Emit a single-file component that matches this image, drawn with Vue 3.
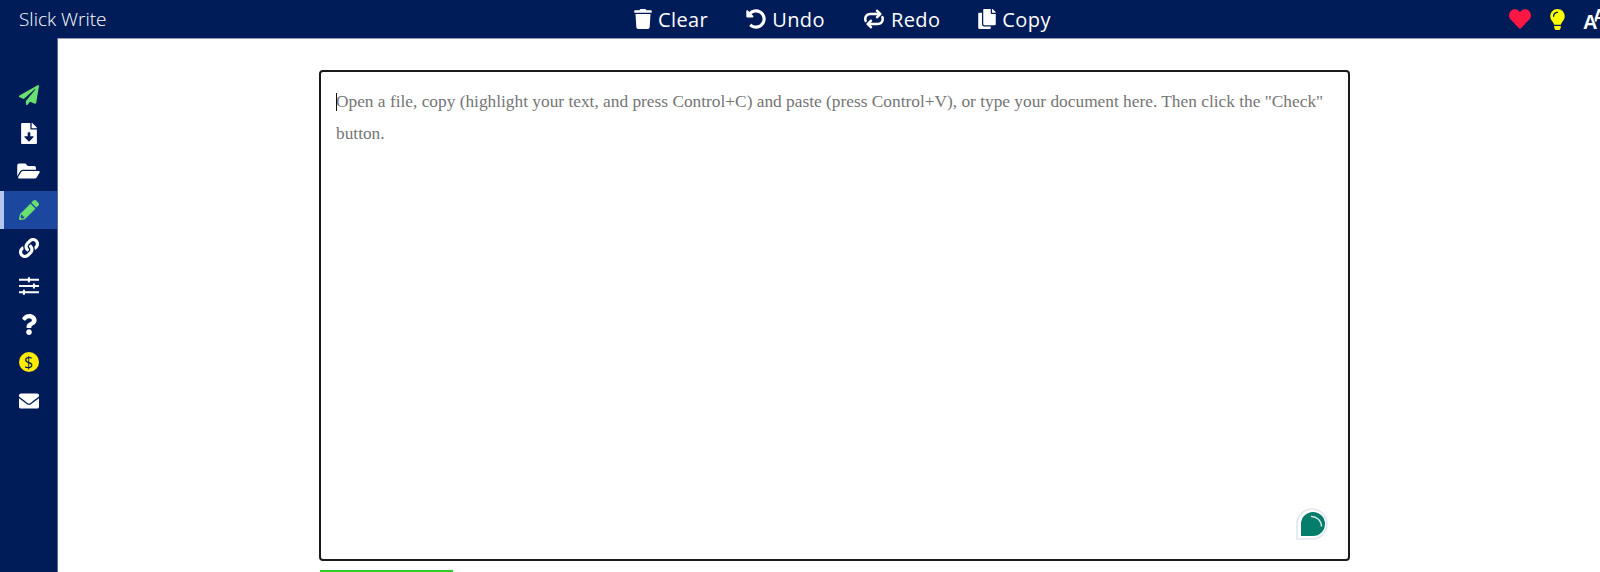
<template>
  <div class="page">
    <header class="topbar">
      <div class="brand">Slick Write</div>
      <nav class="tools">
        <a v-for="t in tools" :key="t.label" class="tool">
          <svg :viewBox="t.box" :style="{ width: t.w + 'px' }" class="tool-icon"><path :d="t.d" fill="#fff" /></svg>
          <span>{{ t.label }}</span>
        </a>
      </nav>
      <div class="extras">
        <svg viewBox="0 0 512 512" class="heart"><path :d="heart" fill="#ff1744" /></svg>
        <svg viewBox="0 0 352 512" class="bulb"><path :d="bulb" fill="#ffff00" /></svg>
        <span class="fontsize"><span class="a-small">A</span><span class="a-big">A</span></span>
      </div>
    </header>
    <div class="body">
      <aside class="sidebar">
        <div
          v-for="(item, i) in sideItems"
          :key="i"
          class="side-item"
          :class="{ active: item.active }"
        >
          <span v-if="item.dollar" class="dollar">$</span>
          <svg v-else :viewBox="item.box" :style="{ width: item.w + 'px', height: item.h + 'px' }">
            <path :d="item.d" :fill="item.color || '#fff'" />
          </svg>
        </div>
      </aside>
      <main class="main">
        <div class="editor">
          <p class="placeholder"><span class="caret"></span>Open a file, copy (highlight your text, and press Control+C) and paste (press Control+V), or type your document here. Then click the "Check" button.</p>
          <svg class="badge" viewBox="0 0 32 32">
            <path d="M1 31V16A15 15 0 1 1 16 31Z" fill="#fff" stroke="#dfe5ef" stroke-width="1.5" />
            <path d="M5 28V16A12 12 0 1 1 17 28Z" fill="#047d6c" />
            <path d="M15 8.5A10 10 0 0 1 25.5 18.5" fill="none" stroke="#d5ebe6" stroke-width="1.3" />
          </svg>
        </div>
        <div class="check-bar"></div>
      </main>
    </div>
  </div>
</template>

<script setup>
const heart = 'M462.3 62.6C407.5 15.9 326 24.3 275.7 76.2L256 96.5l-19.7-20.3C186.1 24.3 104.5 15.9 49.7 62.6c-62.8 53.6-66.1 149.8-9.9 207.9l193.5 199.8c12.5 12.9 32.8 12.9 45.3 0l193.5-199.8c56.3-58.1 53-154.3-9.8-207.9z'
const bulb = 'M96.06 454.35c.01 6.29 1.87 12.45 5.36 17.69l17.09 25.69a31.99 31.99 0 0 0 26.64 14.28h61.71a31.99 31.99 0 0 0 26.64-14.28l17.09-25.69a31.989 31.989 0 0 0 5.36-17.69l.04-38.35H96.01l.05 38.35zM0 176c0 44.37 16.45 84.85 43.56 115.78 16.52 18.85 42.36 58.23 52.21 91.45.04.26.07.52.11.78h160.24c.04-.26.07-.51.11-.78 9.85-33.22 35.69-72.6 52.21-91.45C335.55 260.85 352 220.37 352 176 352 78.61 272.91-.3 175.45 0 73.44.31 0 82.97 0 176zm176-80c-44.11 0-80 35.89-80 80 0 8.84-7.16 16-16 16s-16-7.16-16-16c0-61.76 50.24-112 112-112 8.84 0 16 7.16 16 16s-7.16 16-16 16z'

const tools = [
  {
    label: 'Clear',
    box: '0 0 448 512',
    w: 18,
    d: 'M432 32H312l-9.4-18.7A24 24 0 0 0 281.1 0H166.8a23.72 23.72 0 0 0-21.4 13.3L136 32H16A16 16 0 0 0 0 48v32a16 16 0 0 0 16 16h416a16 16 0 0 0 16-16V48a16 16 0 0 0-16-16zM53.2 467a48 48 0 0 0 47.9 45h245.8a48 48 0 0 0 47.9-45L416 128H32z',
  },
  {
    label: 'Undo',
    box: '0 0 512 512',
    w: 20,
    d: 'M255.545 8c-66.269.119-126.438 26.233-170.86 68.685L48.971 40.971C33.851 25.851 8 36.559 8 57.941V192c0 13.255 10.745 24 24 24h134.059c21.382 0 32.09-25.851 16.971-40.971l-41.75-41.75c30.864-28.899 70.801-44.907 113.23-45.273 92.398-.798 170.283 73.977 169.484 169.442C423.236 348.009 349.816 424 256 424c-41.127 0-79.997-14.678-110.63-41.556-4.743-4.161-11.906-3.908-16.368.553L89.34 422.659c-4.872 4.872-4.631 12.815.482 17.433C133.798 479.813 192.074 504 256 504c136.966 0 247.999-111.033 248-247.998C504.001 119.193 392.354 7.755 255.545 8z',
  },
  {
    label: 'Redo',
    box: '0 0 512 512',
    w: 22,
    d: 'M512 256c0 88.224-71.775 160-160 160H170.067l34.512 32.419c9.875 9.276 10.119 24.883.539 34.464l-10.775 10.775c-9.373 9.372-24.568 9.372-33.941 0l-92.686-92.686c-9.373-9.373-9.373-24.568 0-33.941l92.686-92.686c9.373-9.373 24.568-9.373 33.941 0l10.775 10.775c9.581 9.581 9.337 25.187-.539 34.464L170.067 352H352c52.935 0 96-43.065 96-96 0-13.958-2.996-27.228-8.376-39.204-4.061-9.039-2.284-19.626 4.723-26.633l12.183-12.183c11.499-11.499 30.965-8.526 38.312 5.982C505.814 205.624 512 230.103 512 256zM72.376 295.204C66.996 283.228 64 269.958 64 256c0-52.935 43.065-96 96-96h181.933l-34.512 32.419c-9.875 9.276-10.119 24.883-.539 34.464l10.775 10.775c9.373 9.372 24.568 9.372 33.941 0l92.686-92.686c9.373-9.373 9.373-24.568 0-33.941l-92.686-92.686c-9.373-9.373-24.568-9.373-33.941 0L306.882 29.12c-9.581 9.581-9.337 25.187.539 34.464L341.933 96H160C71.775 96 0 167.776 0 256c0 25.897 6.186 50.376 17.157 72.039 7.347 14.508 26.813 17.481 38.312 5.982l12.183-12.183c7.008-7.008 8.786-17.595 4.724-26.634z',
  },
  {
    label: 'Copy',
    box: '0 0 448 512',
    w: 18,
    d: 'M320 448v40c0 13.255-10.745 24-24 24H24c-13.255 0-24-10.745-24-24V120c0-13.255 10.745-24 24-24h72v296c0 30.879 25.121 56 56 56h168zm0-344V0H152c-13.255 0-24 10.745-24 24v368c0 13.255 10.745 24 24 24h272c13.255 0 24-10.745 24-24V128H344c-13.2 0-24-10.8-24-24zm120.971-31.029L375.029 7.029A24 24 0 0 0 358.059 0H352v96h96v-6.059a24 24 0 0 0-7.029-16.97z',
  },
]

const sideItems = [
  {
    box: '0 0 512 512', w: 20, h: 20, color: '#69e06f',
    d: 'M476 3.2L12.5 270.6c-18.1 10.4-15.8 35.6 2.2 43.2L121 358.4l287.3-253.2c5.5-4.9 13.3 2.6 8.6 8.3L176 407v80.5c0 23.6 28.5 32.9 42.5 15.8L282 426l124.6 52.2c14.2 6 30.4-2.9 33-18.2l72-432C515 7.8 493.3-6.8 476 3.2z',
  },
  {
    box: '0 0 384 512', w: 16, h: 21,
    d: 'M224 136V0H24C10.7 0 0 10.7 0 24v464c0 13.3 10.7 24 24 24h336c13.3 0 24-10.7 24-24V160H248c-13.2 0-24-10.8-24-24zm76.45 211.36l-96.42 95.7c-6.65 6.61-17.39 6.61-24.04 0l-96.42-95.7C73.42 337.29 80.54 320 94.82 320H160v-80c0-8.84 7.16-16 16-16h32c8.84 0 16 7.16 16 16v80h65.18c14.28 0 21.4 17.29 11.27 27.36zM377 105L279.1 7c-4.5-4.5-10.6-7-17-7H256v128h128v-6.1c0-6.3-2.5-12.4-7-16.9z',
  },
  {
    box: '0 0 576 512', w: 23, h: 20,
    d: 'M572.694 292.093L500.27 416.248A63.997 63.997 0 0 1 444.989 448H45.025c-18.523 0-30.064-20.093-20.731-36.093l72.424-124.155A64 64 0 0 1 152 256h399.964c18.523 0 30.064 20.093 20.73 36.093zM152 224h328v-48c0-26.51-21.49-48-48-48H272l-64-64H48C21.49 64 0 85.49 0 112v278.046l69.077-118.418C86.214 242.25 117.989 224 152 224z',
  },
  {
    box: '0 0 512 512', w: 20, h: 20, color: '#69e06f', active: true,
    d: 'M497.9 142.1l-46.1 46.1c-4.7 4.7-12.3 4.7-17 0l-111-111c-4.7-4.7-4.7-12.3 0-17l46.1-46.1c18.7-18.7 49.1-18.7 67.9 0l60.1 60.1c18.8 18.7 18.8 49.1 0 67.9zM284.2 99.8L21.6 362.4.4 483.9c-2.9 16.4 11.4 30.6 27.8 27.8l121.5-21.3 262.6-262.6c4.7-4.7 4.7-12.3 0-17l-111-111c-4.8-4.7-12.4-4.7-17.1 0zM88 424h48v36.3l-64.5 11.3-31.1-31.1L51.7 376H88v48z',
  },
  {
    box: '0 0 512 512', w: 20, h: 20,
    d: 'M326.612 185.391c59.747 59.809 58.927 155.698.36 214.59-.11.12-.24.25-.36.37l-67.2 67.2c-59.27 59.27-155.699 59.262-214.96 0-59.27-59.26-59.27-155.7 0-214.96l37.106-37.106c9.84-9.84 26.786-3.3 27.294 10.606.648 17.722 3.826 35.527 9.69 52.721 1.986 5.822.567 12.262-3.783 16.612l-13.087 13.087c-28.026 28.026-28.905 73.66-1.155 101.96 28.024 28.579 74.086 28.749 102.325.51l67.2-67.19c28.191-28.191 28.073-73.757 0-101.83-3.701-3.694-7.429-6.564-10.341-8.569a16.037 16.037 0 0 1-6.947-12.606c-.396-10.567 3.348-21.456 11.698-29.806l21.054-21.055c5.521-5.521 14.182-6.199 20.584-1.731a152.482 152.482 0 0 1 20.522 17.197zM467.547 44.449c-59.261-59.262-155.69-59.27-214.96 0l-67.2 67.2c-.12.12-.25.25-.36.37-58.566 58.892-59.387 154.781.36 214.59a152.454 152.454 0 0 0 20.521 17.196c6.402 4.468 15.064 3.789 20.584-1.731l21.054-21.055c8.35-8.35 12.094-19.239 11.698-29.806a16.037 16.037 0 0 0-6.947-12.606c-2.912-2.005-6.64-4.875-10.341-8.569-28.073-28.073-28.191-73.639 0-101.83l67.2-67.19c28.239-28.239 74.3-28.069 102.325.51 27.75 28.3 26.872 73.934-1.155 101.96l-13.087 13.087c-4.35 4.35-5.769 10.79-3.783 16.612 5.864 17.194 9.042 34.999 9.69 52.721.509 13.906 17.454 20.446 27.294 10.606l37.106-37.106c59.271-59.259 59.271-155.699.001-214.959z',
  },
  {
    box: '0 0 512 512', w: 20, h: 20,
    d: 'M0 68h512v56H0zM228 30h52v132h-52zM0 228h512v56H0zM356 190h52v132h-52zM0 388h512v56H0zM100 350h52v132h-52z',
  },
  {
    box: '0 0 384 512', w: 16, h: 21,
    d: 'M202.021 0C122.202 0 70.503 32.703 29.914 91.026c-7.363 10.58-5.093 25.086 5.178 32.874l43.138 32.709c10.373 7.865 25.132 6.026 33.253-4.148 25.049-31.381 43.63-49.449 82.757-49.449 30.764 0 68.816 19.799 68.816 49.631 0 22.552-18.617 34.134-48.993 51.164-35.423 19.86-82.299 44.576-82.299 106.405V320c0 13.255 10.745 24 24 24h72.471c13.255 0 24-10.745 24-24v-5.773c0-42.86 125.268-44.645 125.268-160.627C377.504 66.256 286.902 0 202.021 0zM192 373.459c-38.196 0-69.271 31.075-69.271 69.271 0 38.195 31.075 69.27 69.271 69.27s69.271-31.075 69.271-69.271-31.075-69.27-69.271-69.27z',
  },
  { dollar: true },
  {
    box: '0 0 512 512', w: 20, h: 20,
    d: 'M502.3 190.8c3.9-3.1 9.7-.2 9.7 4.7V400c0 26.5-21.5 48-48 48H48c-26.5 0-48-21.5-48-48V195.6c0-5 5.7-7.8 9.7-4.7 22.4 17.4 52.1 39.5 154.1 113.6 21.1 15.4 56.7 47.8 92.2 47.6 35.7.3 72-32.8 92.3-47.6 102-74.1 131.6-96.3 154-113.7zM256 320c23.2.4 56.6-29.2 73.4-41.4 132.7-96.3 142.8-104.7 173.4-128.7 5.8-4.5 9.2-11.5 9.2-18.9v-19c0-26.5-21.5-48-48-48H48C21.5 64 0 85.5 0 112v19c0 7.4 3.4 14.3 9.2 18.9 30.6 23.9 40.7 32.4 173.4 128.7 16.8 12.2 50.2 41.8 73.4 41.4z',
  },
]
</script>

<style>
html, body {
  margin: 0;
  background: #fff;
  overflow: hidden;
}
</style>

<style scoped>
.page {
  width: 1600px;
  height: 572px;
  display: flex;
  flex-direction: column;
  overflow: hidden;
}

.topbar {
  height: 38px;
  background: #001c58;
  color: #fff;
  display: flex;
  align-items: center;
  flex: none;
}

.brand {
  width: 634px;
  padding-left: 19px;
  box-sizing: border-box;
  font-family: "Open Sans", sans-serif;
  font-weight: 300;
  font-size: 19px;
  flex: none;
}

.tools {
  display: flex;
  gap: 38px;
  flex: none;
}

.tool {
  display: flex;
  align-items: center;
  gap: 6px;
  font-family: "Open Sans", sans-serif;
  font-size: 20px;
  letter-spacing: 0.4px;
}

.tool-icon {
  height: 20px;
  flex: none;
}

.extras {
  margin-left: auto;
  margin-right: -13px;
  display: flex;
  align-items: center;
}

.heart {
  width: 22px;
  height: 22px;
  margin-right: 19px;
}

.bulb {
  width: 15px;
  height: 21px;
  margin-right: 18px;
}

.fontsize {
  display: block;
  position: relative;
  width: 30px;
  height: 24px;
  font-family: "Liberation Sans", sans-serif;
  font-weight: 700;
  color: #fff;
  line-height: 1;
}

.a-big {
  position: absolute;
  left: 0;
  top: 5px;
  font-size: 20px;
  text-shadow: 1px 0 #001c58, 0 -1px #001c58;
}

.a-small {
  position: absolute;
  left: 10px;
  top: 0;
  font-size: 18px;
}

.body {
  flex: 1;
  display: flex;
  min-height: 0;
}

.sidebar {
  width: 58px;
  flex: none;
  background: #001c58;
  border-right: 1px solid #5a6c96;
  box-sizing: border-box;
  padding-top: 38px;
}

.side-item {
  height: 38.2px;
  display: flex;
  align-items: center;
  justify-content: center;
  box-sizing: border-box;
}

.side-item.active {
  background: #1c479f;
  box-shadow: inset 4px 0 #b3c7f0;
}

.dollar {
  width: 20px;
  height: 20px;
  border-radius: 50%;
  background: #ffeb00;
  color: #001c58;
  font-family: "Open Sans", sans-serif;
  font-weight: 500;
  font-size: 16px;
  line-height: 20px;
  text-align: center;
}

.main {
  flex: 1;
  border-top: 1px solid #8f9bb8;
  padding-top: 31px;
  padding-left: 261px;
  box-sizing: border-box;
}

.editor {
  width: 1031px;
  height: 491px;
  box-sizing: border-box;
  border: 2px solid #1a1a1a;
  border-radius: 4px;
  padding: 14px 15px;
  position: relative;
}

.placeholder {
  margin: 0;
  font-family: "Liberation Serif", serif;
  font-size: 17.33px;
  line-height: 32px;
  color: #757575;
  position: relative;
}

.caret {
  position: absolute;
  left: 0;
  top: 7px;
  width: 1px;
  height: 18px;
  background: #111;
}

.badge {
  position: absolute;
  right: 20px;
  bottom: 19px;
  width: 32px;
  height: 32px;
}

.check-bar {
  width: 133px;
  height: 2px;
  margin-top: 9px;
  margin-left: 1px;
  background: #2ecc2e;
}
</style>
